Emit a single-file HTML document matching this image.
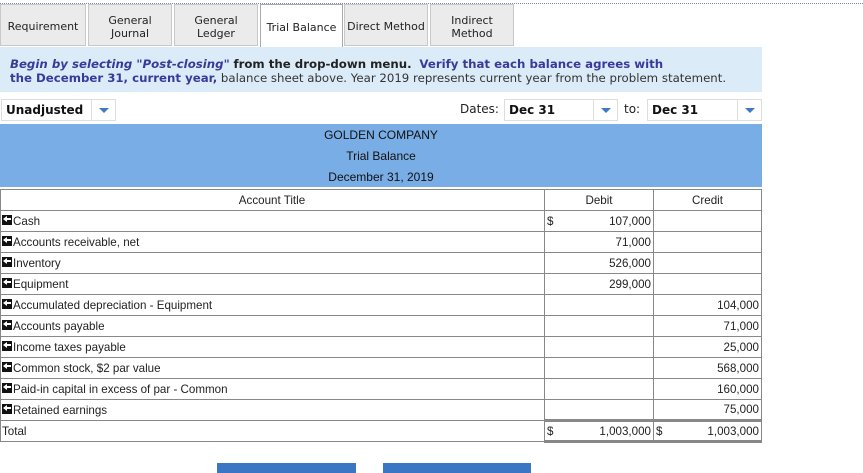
<!DOCTYPE html><html><head><style>
*{margin:0;padding:0;box-sizing:border-box}
body{width:863px;height:469px;background:#fff;position:relative;overflow:hidden;font-family:"DejaVu Sans",Verdana,sans-serif;font-size:11px;color:#222}
.a{position:absolute}
.topline{left:0;top:3px;width:863px;border-top:1px dotted #6a8cc0}
.tab{position:absolute;top:4px;height:42px;padding-top:3px;background:#ebebeb;border:1px solid #c8c8c8;display:flex;align-items:center;justify-content:center;text-align:center;font-size:11px;line-height:13px;color:#222}
.tab.on{background:#fff;border-color:#aaa;border-bottom:none;height:43px}
.info{left:0;top:47px;width:762px;height:45px;background:#dbebf8;padding:10px 0 0 10px;font-size:11.75px;line-height:14px;color:#333}
.info b.bl,.info i{color:#3a3a9a;font-weight:bold}
.info b{color:#222}
.sel{position:absolute;height:22px;border:1px solid #ddd;background:#fff;font-weight:bold;font-size:12px;padding:3px 4px;color:#111}
.sel .ar{position:absolute;right:0;top:0;width:24px;height:20px;border-left:1px solid #ddd}
.sel .ar:after{content:"";position:absolute;left:7px;top:8px;border-left:5px solid transparent;border-right:5px solid transparent;border-top:5px solid #3d7ac4}
.hdr{left:0;top:124px;width:762px;height:63px;background:#79ade5;font-family:"Liberation Sans",Arial,sans-serif;font-size:12px;color:#111;text-align:center;line-height:21px;padding-top:1px}
table{position:absolute;left:0;top:189px;border-collapse:collapse;font-family:"Liberation Sans",Arial,sans-serif;font-size:11.6px;color:#222}
td{height:21px;border:1px solid #888;padding:0 2px;white-space:nowrap}
td.t{width:544px;padding-left:1px}
td.d{width:109px;text-align:right}
td.c{width:108px;text-align:right}
.ic{display:inline-block;width:10px;height:10px;background:#111;vertical-align:0px;margin-right:1px;position:relative}
.ic:after{content:"";position:absolute;left:1px;top:1px;border-right:4px solid #fff;border-top:3px solid transparent;border-bottom:3px solid transparent}
.ic:before{content:"";position:absolute;left:4px;top:3px;width:5px;height:2px;background:#fff}
.s{float:left}
tr.tot td.d,tr.tot td.c{border-top:3px solid #888;border-bottom:3px solid #888}
.btn{position:absolute;top:463px;height:10px;background:#3a76c4}
</style></head><body>
<div class="a topline"></div>
<div class="tab" style="left:0;width:86px">Requirement</div>
<div class="tab" style="left:88px;width:84px">General<br>Journal</div>
<div class="tab" style="left:174px;width:84px">General<br>Ledger</div>
<div class="tab on" style="left:260px;width:83px">Trial Balance</div>
<div class="tab" style="left:344px;width:84px">Direct Method</div>
<div class="tab" style="left:430px;width:84px">Indirect<br>Method</div>
<div class="a info"><i>Begin by selecting "Post-closing"</i> <b>from the drop-down menu.</b> <b class="bl">&nbsp;Verify that each balance agrees with<br>the December 31, current year,</b> balance sheet above. Year 2019 represents current year from the problem statement.</div>
<div class="sel" style="left:1px;top:99px;width:115px">Unadjusted<span class="ar"></span></div>
<div class="a" style="left:460px;top:102px;font-size:12px">Dates:</div>
<div class="sel" style="left:504px;top:99px;width:114px">Dec 31<span class="ar"></span></div>
<div class="a" style="left:624px;top:102px;font-size:12px">to:</div>
<div class="sel" style="left:647px;top:99px;width:115px">Dec 31<span class="ar"></span></div>
<div class="a hdr">GOLDEN COMPANY<br>Trial Balance<br>December 31, 2019</div>
<table>
<tr><td class="t" style="text-align:center">Account Title</td><td class="d" style="text-align:center">Debit</td><td class="c" style="text-align:center">Credit</td></tr>
<tr><td class="t"><span class="ic"></span>Cash</td><td class="d"><span class="s">$</span>107,000</td><td class="c"></td></tr>
<tr><td class="t"><span class="ic"></span>Accounts receivable, net</td><td class="d">71,000</td><td class="c"></td></tr>
<tr><td class="t"><span class="ic"></span>Inventory</td><td class="d">526,000</td><td class="c"></td></tr>
<tr><td class="t"><span class="ic"></span>Equipment</td><td class="d">299,000</td><td class="c"></td></tr>
<tr><td class="t"><span class="ic"></span>Accumulated depreciation - Equipment</td><td class="d"></td><td class="c">104,000</td></tr>
<tr><td class="t"><span class="ic"></span>Accounts payable</td><td class="d"></td><td class="c">71,000</td></tr>
<tr><td class="t"><span class="ic"></span>Income taxes payable</td><td class="d"></td><td class="c">25,000</td></tr>
<tr><td class="t"><span class="ic"></span>Common stock, $2 par value</td><td class="d"></td><td class="c">568,000</td></tr>
<tr><td class="t"><span class="ic"></span>Paid-in capital in excess of par - Common</td><td class="d"></td><td class="c">160,000</td></tr>
<tr><td class="t"><span class="ic"></span>Retained earnings</td><td class="d"></td><td class="c">75,000</td></tr>
<tr class="tot"><td class="t">Total</td><td class="d"><span class="s">$</span>1,003,000</td><td class="c"><span class="s">$</span>1,003,000</td></tr>
</table>
<div class="btn" style="left:217px;width:139px"></div>
<div class="btn" style="left:383px;width:148px"></div>
</body></html>
